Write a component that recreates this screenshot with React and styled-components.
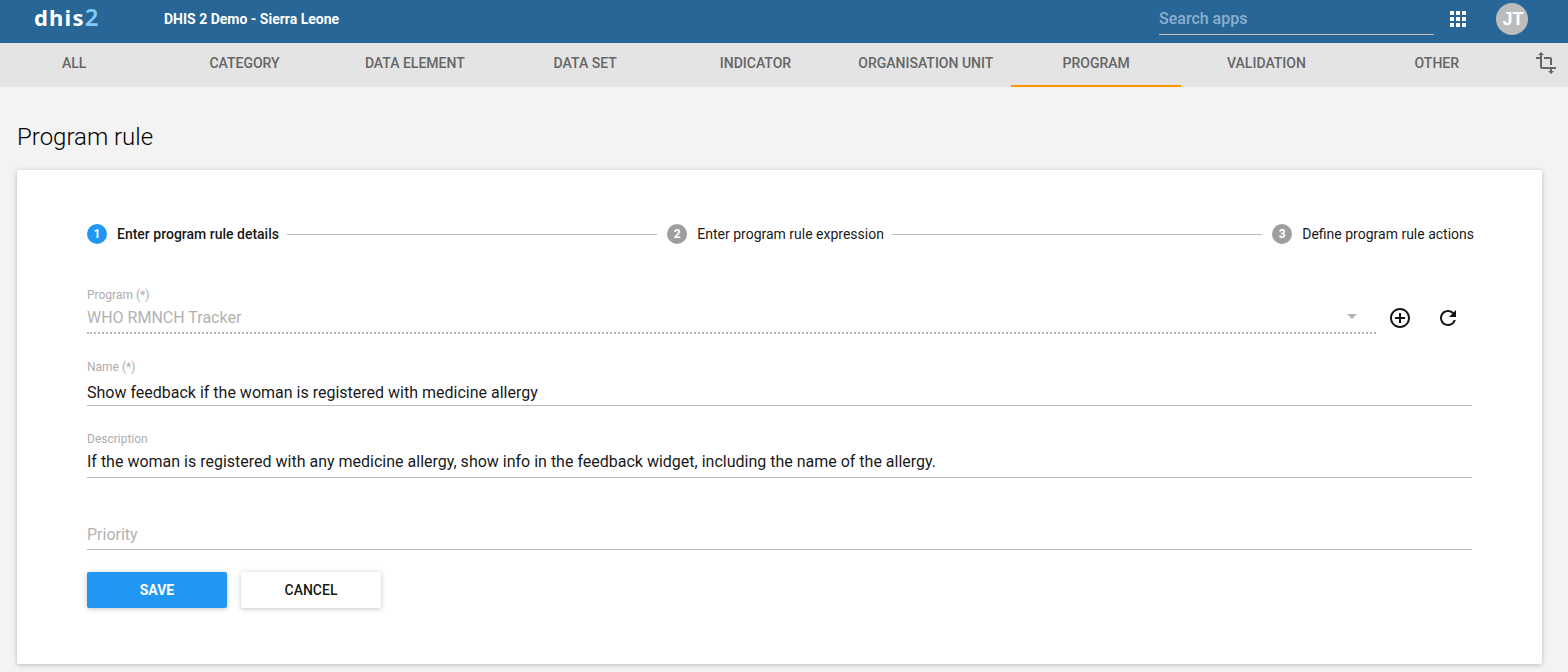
import React from "react";
import styled, { createGlobalStyle } from "styled-components";
import {
  MdApps,
  MdTransform,
  MdAddCircleOutline,
  MdRefresh,
  MdArrowDropDown,
} from "react-icons/md";

const GlobalStyle = createGlobalStyle`
  * { box-sizing: border-box; }
  html, body { margin: 0; }
  body {
    background: #f3f3f3;
    font-family: Roboto, "Liberation Sans", sans-serif;
    color: rgba(0, 0, 0, 0.92);
    overflow: hidden;
  }
`;

const Page = styled.div`
  height: 672px;
  overflow: hidden;
`;

const HeaderBar = styled.header`
  height: 43px;
  display: flex;
  align-items: flex-start;
  padding: 0 40px 0 34px;
  background: #276696;
  color: #fff;
`;

const Logo = styled.div`
  width: 130px;
  height: 43px;
  font: 700 22px/34px "Noto Sans", "Open Sans", sans-serif;
  letter-spacing: 1.2px;

  span { color: #80caff; font-size: 24px; font-weight: 600; line-height: 1; }
`;

const AppTitle = styled.div`
  flex: 1;
  font-size: 14px;
  line-height: 38px;
  font-weight: 700;
`;

const SearchBox = styled.div`
  width: 275px;
  height: 35px;
  border-bottom: 1px solid #bdbdbd;
  font-size: 16px;
  font-weight: 500;
  line-height: 37px;
  color: #8bb0cf;
`;

const AppsButton = styled.div`
  width: 24px;
  height: 24px;
  margin: 7px 26px 0 12px;

  svg { display: block; }
`;

const Avatar = styled.div`
  width: 32px;
  height: 32px;
  margin-top: 3px;
  padding-left: 2px;
  border-radius: 50%;
  background: #bcbcbc;
  text-align: center;
  font: 700 18px/32px "Liberation Sans", sans-serif;
`;

const NavBar = styled.nav`
  height: 44px;
  display: flex;
  background: #e4e4e4;
  color: #666;
`;

const Tabs = styled.div`
  display: flex;
  width: 1533px;
  margin-left: -11px;
  flex: none;
`;

const Tab = styled.div`
  flex: 1 1 0;
  height: 44px;
  border-bottom: 2px solid ${(p) => (p.$active ? "#ff9800" : "transparent")};
  text-align: center;
  font-size: 14px;
  font-weight: 500;
  line-height: 40px;
  white-space: nowrap;
`;

const NavIcon = styled.div`
  margin: 8px 0 0 12px;
  height: 24px;

  svg { display: block; }
`;

const PageTitle = styled.h1`
  margin: 0;
  height: 83px;
  padding: 33px 0 0 17px;
  color: #000;
  font-size: 24px;
  font-weight: 300;
  line-height: 34px;
`;

const Card = styled.main`
  width: 1525px;
  height: 494px;
  margin-left: 17px;
  padding: 54px 70px 0;
  border-radius: 2px;
  background: #fff;
  box-shadow: 0 1px 6px rgba(0, 0, 0, 0.12), 0 1px 4px rgba(0, 0, 0, 0.12);
`;

const Stepper = styled.div`
  display: flex;
  align-items: center;
  width: 1387px;
  height: 20px;
`;

const StepBadge = styled.div`
  width: 20px;
  height: 20px;
  margin-right: 10px;
  border-radius: 50%;
  background: ${(p) => (p.$active ? "#2196f3" : "#9e9e9e")};
  color: #fff;
  text-align: center;
  font-size: 12px;
  font-weight: 700;
  line-height: 20px;
`;

const StepLabel = styled.div`
  font-size: 14px;
  line-height: 20px;
  font-weight: ${(p) => (p.$active ? 500 : 400)};
  white-space: nowrap;
`;

const StepLine = styled.div`
  flex: 1;
  height: 1px;
  margin: 1px 10px 0 8px;
  background: #bdbdbd;
`;

const FormRow = styled.div`
  display: flex;
  margin-top: ${(p) => p.$top || 0}px;
`;

const Field = styled.div`
  width: ${(p) => p.$width || 1385}px;
  height: ${(p) => p.$height || 72}px;
`;

const FieldLabel = styled.div`
  height: 14px;
  font-size: 12px;
  line-height: 14px;
  color: #adadad;
`;

const FieldValue = styled.div`
  display: flex;
  justify-content: space-between;
  height: ${(p) => p.$height || 32}px;
  padding-top: ${(p) => p.$pad || 0}px;
  border-bottom: ${(p) => (p.$disabled ? "2px dotted #b5b5b5" : "1px solid #bdbdbd")};
  font-size: 16px;
  line-height: 20px;
  color: ${(p) => (p.$disabled || p.$hint ? "#b2b2b2" : "rgba(0, 0, 0, 0.92)")};

  svg { display: block; margin: -4px 12px 0 0; }
`;

const RowIcon = styled.div`
  height: 24px;
  margin: 18px 12px 0;

  svg { display: block; }
`;

const Buttons = styled.div`
  display: flex;
  gap: 14px;
`;

const Button = styled.button`
  width: 140px;
  height: 36px;
  padding: 0;
  border: 0;
  border-radius: 2px;
  background: ${(p) => (p.$primary ? "#2196f3" : "#fff")};
  color: ${(p) => (p.$primary ? "#fff" : "rgba(0, 0, 0, 0.92)")};
  box-shadow: 0 1px 6px rgba(0, 0, 0, 0.12), 0 1px 4px rgba(0, 0, 0, 0.12);
  font: ${(p) => (p.$primary ? 700 : 500)} 14px/36px Roboto, sans-serif;
`;

const SECTIONS = [
  "ALL",
  "CATEGORY",
  "DATA ELEMENT",
  "DATA SET",
  "INDICATOR",
  "ORGANISATION UNIT",
  "PROGRAM",
  "VALIDATION",
  "OTHER",
];

const STEPS = [
  "Enter program rule details",
  "Enter program rule expression",
  "Define program rule actions",
];

export default function App() {
  return (
    <Page>
      <GlobalStyle />
      <HeaderBar>
        <Logo>dhis<span>2</span></Logo>
        <AppTitle>DHIS 2 Demo - Sierra Leone</AppTitle>
        <SearchBox>Search apps</SearchBox>
        <AppsButton><MdApps size={24} /></AppsButton>
        <Avatar>JT</Avatar>
      </HeaderBar>
      <NavBar>
        <Tabs>
          {SECTIONS.map((name) => (
            <Tab key={name} $active={name === "PROGRAM"}>{name}</Tab>
          ))}
        </Tabs>
        <NavIcon><MdTransform size={24} /></NavIcon>
      </NavBar>
      <PageTitle>Program rule</PageTitle>
      <Card>
        <Stepper>
          {STEPS.map((label, i) => (
            <React.Fragment key={label}>
              {i > 0 && <StepLine />}
              <StepBadge $active={i === 0}>{i + 1}</StepBadge>
              <StepLabel $active={i === 0}>{label}</StepLabel>
            </React.Fragment>
          ))}
        </Stepper>
        <FormRow $top={44}>
          <Field $width={1289}>
            <FieldLabel>Program (*)</FieldLabel>
            <FieldValue $disabled $pad={6}>
              WHO RMNCH Tracker
              <MdArrowDropDown size={24} />
            </FieldValue>
          </Field>
          <RowIcon><MdAddCircleOutline size={24} /></RowIcon>
          <RowIcon><MdRefresh size={24} /></RowIcon>
        </FormRow>
        <Field>
          <FieldLabel>Name (*)</FieldLabel>
          <FieldValue $pad={9}>Show feedback if the woman is registered with medicine allergy</FieldValue>
        </Field>
        <Field>
          <FieldLabel>Description</FieldLabel>
          <FieldValue $pad={6}>
            If the woman is registered with any medicine allergy, show info in the feedback widget, including the name of the allergy.
          </FieldValue>
        </Field>
        <Field $height={68}>
          <FieldValue $height={46} $pad={21} $hint>Priority</FieldValue>
        </Field>
        <Buttons>
          <Button $primary>SAVE</Button>
          <Button>CANCEL</Button>
        </Buttons>
      </Card>
    </Page>
  );
}
